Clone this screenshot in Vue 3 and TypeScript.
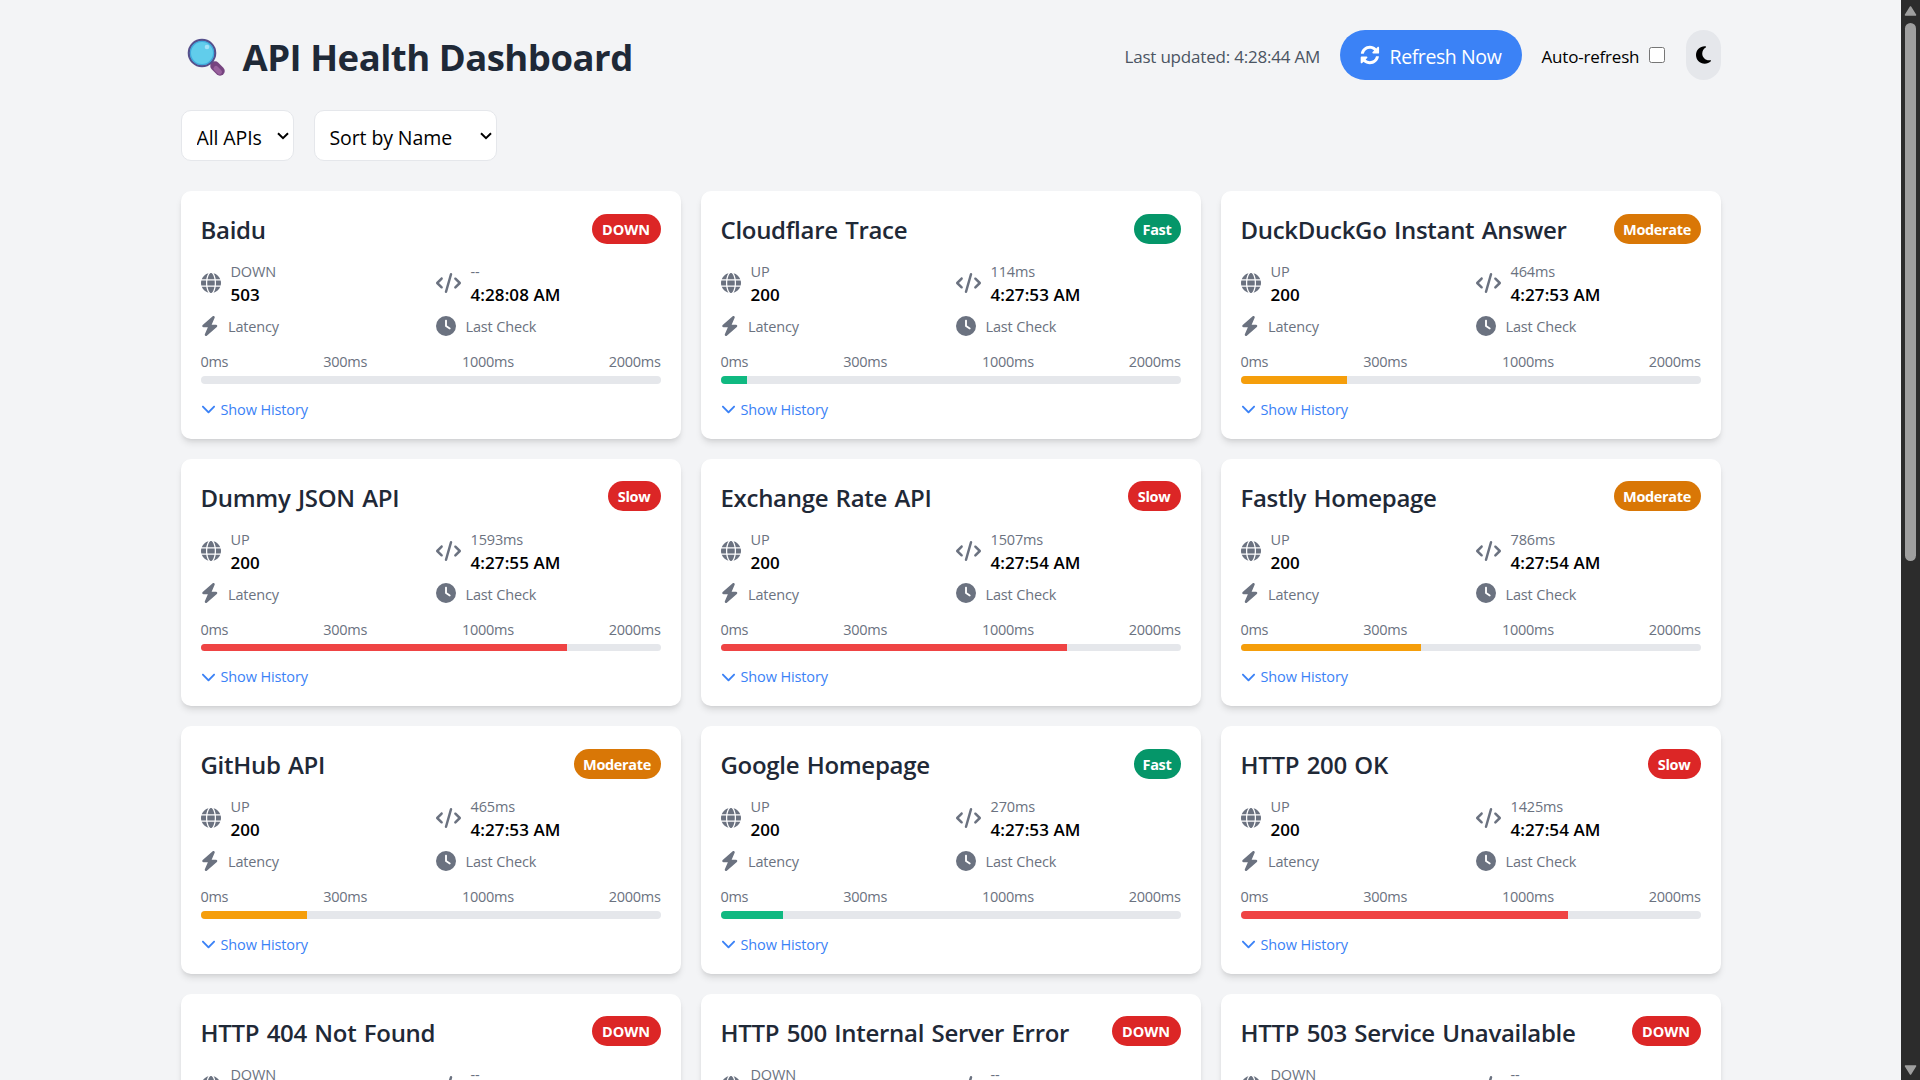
<script setup lang="ts">
type Level = 'down' | 'fast' | 'moderate' | 'slow'

interface Api {
  name: string
  level: Level
  code: number
  latency: number | null
  checked: string
}

const badgeText: Record<Level, string> = {
  down: 'DOWN',
  fast: 'Fast',
  moderate: 'Moderate',
  slow: 'Slow',
}

const apis: Api[] = [
  { name: 'Baidu', level: 'down', code: 503, latency: null, checked: '4:28:08 AM' },
  { name: 'Cloudflare Trace', level: 'fast', code: 200, latency: 114, checked: '4:27:53 AM' },
  { name: 'DuckDuckGo Instant Answer', level: 'moderate', code: 200, latency: 464, checked: '4:27:53 AM' },
  { name: 'Dummy JSON API', level: 'slow', code: 200, latency: 1593, checked: '4:27:55 AM' },
  { name: 'Exchange Rate API', level: 'slow', code: 200, latency: 1507, checked: '4:27:54 AM' },
  { name: 'Fastly Homepage', level: 'moderate', code: 200, latency: 786, checked: '4:27:54 AM' },
  { name: 'GitHub API', level: 'moderate', code: 200, latency: 465, checked: '4:27:53 AM' },
  { name: 'Google Homepage', level: 'fast', code: 200, latency: 270, checked: '4:27:53 AM' },
  { name: 'HTTP 200 OK', level: 'slow', code: 200, latency: 1425, checked: '4:27:54 AM' },
  { name: 'HTTP 404 Not Found', level: 'down', code: 404, latency: null, checked: '4:28:08 AM' },
  { name: 'HTTP 500 Internal Server Error', level: 'down', code: 500, latency: null, checked: '4:28:08 AM' },
  { name: 'HTTP 503 Service Unavailable', level: 'down', code: 503, latency: null, checked: '4:28:08 AM' },
]

const barWidth = (api: Api) => `${((api.latency ?? 0) / 2000) * 100}%`
</script>

<template>
  <div class="page">
    <main class="content">
      <header class="header">
        <h1 class="title">
          <svg class="lens" viewBox="0 0 38 38">
            <line x1="23" y1="23" x2="27" y2="27" stroke="#56508c" stroke-width="4" />
            <line x1="28" y1="28" x2="33" y2="33" stroke="#764480" stroke-width="9.500" stroke-linecap="round" />
            <line x1="29" y1="30.500" x2="32.500" y2="34" stroke="#98609d" stroke-width="5" stroke-linecap="round" />
            <circle cx="15" cy="15" r="13.200" fill="#61cdeb" stroke="#56508c" stroke-width="2.200" />
            <circle cx="15" cy="15" r="11.600" fill="none" stroke="#3fa9dc" stroke-width="1.200" />
            <circle cx="20" cy="9" r="2.300" fill="#a4e2f7" />
          </svg>
          <span>API Health Dashboard</span>
        </h1>
        <div class="tools">
          <span class="updated">Last updated: 4:28:44 AM</span>
          <button class="refresh">
            <svg class="icon" viewBox="0 0 512 512"><path d="M370.720 133.280C339.458 104.008 298.888 87.962 255.848 88c-77.458.068-144.328 53.178-162.791 126.850-1.344 5.363-6.122 9.150-11.651 9.150H24.103c-7.498 0-13.194-6.807-11.807-14.176C33.933 94.924 134.813 8 256 8c66.448 0 126.791 26.136 171.315 68.685L463.030 40.970C478.149 25.851 504 36.559 504 57.941V192c0 13.255-10.745 24-24 24H345.941c-21.382 0-32.090-25.851-16.971-40.971l41.750-41.749zM32 296h134.059c21.382 0 32.090 25.851 16.971 40.971l-41.750 41.750c31.262 29.273 71.835 45.319 114.876 45.280 77.418-.070 144.315-53.144 162.787-126.849 1.344-5.363 6.122-9.150 11.651-9.150h57.304c7.498 0 13.194 6.807 11.807 14.176C478.067 417.076 377.187 504 256 504c-66.448 0-126.791-26.136-171.315-68.685L48.970 471.030C33.851 486.149 8 475.441 8 454.059V320c0-13.255 10.745-24 24-24z" transform="translate(10 14) scale(.95)" /></svg>
            <span class="refresh-text">Refresh Now</span>
          </button>
          <label class="auto"><span>Auto-refresh</span><input type="checkbox" /></label>
          <button class="theme">
            <svg viewBox="0 0 384 512"><path d="M223.500 32C100 32 0 132.300 0 256S100 480 223.500 480c60.600 0 115.500-24.200 155.800-63.400c5-4.900 6.300-12.500 3.100-18.700s-10.100-9.700-17-8.500c-9.800 1.700-19.800 2.600-30.100 2.600c-96.900 0-175.500-78.800-175.500-176c0-65.800 36-123.100 89.300-153.300c6.100-3.500 9.200-10.500 7.700-17.300s-7.300-11.900-14.300-12.500c-6.300-.5-12.600-.8-19-.8z" /></svg>
          </button>
        </div>
      </header>

      <div class="filters">
        <select class="filter-status"><option>All APIs</option></select>
        <select class="filter-sort"><option>Sort by Name</option></select>
      </div>

      <section class="grid">
        <article v-for="api in apis" :key="api.name" class="card">
          <div class="card-head">
            <h2>{{ api.name }}</h2>
            <span class="badge" :class="api.level">{{ badgeText[api.level] }}</span>
          </div>
          <div class="facts">
            <div class="fact">
              <svg class="icon" viewBox="0 0 512 512"><path d="M352 256c0 22.200-1.200 43.600-3.300 64H163.300c-2.200-20.400-3.300-41.800-3.300-64s1.200-43.600 3.300-64H348.700c2.200 20.400 3.300 41.800 3.300 64zm28.800-64H503.900c5.300 20.500 8.100 41.900 8.100 64s-2.800 43.500-8.100 64H380.800c2.100-20.600 3.200-42 3.200-64s-1.100-43.400-3.200-64zm112.600-32H376.700c-10-63.900-29.800-117.400-55.300-151.600c78.300 20.700 142 77.500 171.900 151.600zm-149.100 0H167.700c6.100-36.400 15.500-68.600 27-94.700c10.500-23.600 22.200-40.700 33.500-51.500C239.400 3.200 248.700 0 256 0s16.600 3.200 27.800 13.800c11.300 10.800 23 27.900 33.500 51.500c11.600 26 20.900 58.200 27 94.700zm-209 0H18.600C48.600 85.900 112.200 29.100 190.600 8.400C165.100 42.600 145.300 96.100 135.300 160zM8.100 192H131.200c-2.100 20.600-3.200 42-3.200 64s1.100 43.400 3.200 64H8.100C2.800 299.500 0 278.100 0 256s2.800-43.500 8.100-64zM194.700 446.600c-11.600-26-20.900-58.200-27-94.600H344.300c-6.100 36.400-15.500 68.600-27 94.600c-10.500 23.600-22.200 40.700-33.500 51.500C272.600 508.800 263.300 512 256 512s-16.600-3.200-27.800-13.800c-11.300-10.800-23-27.900-33.500-51.500zM135.300 352c10 63.900 29.800 117.400 55.300 151.600C112.200 482.900 48.600 426.100 18.600 352H135.300zm358.100 0c-30 74.100-93.600 130.900-171.900 151.600c25.500-34.200 45.200-87.700 55.300-151.600H493.400z" /></svg>
              <div>
                <div class="label">{{ api.level === 'down' ? 'DOWN' : 'UP' }}</div>
                <div class="value">{{ api.code }}</div>
              </div>
            </div>
            <div class="fact">
              <svg class="icon wide" viewBox="0 0 640 512"><path d="M392.800 1.200c-17-4.900-34.700 5-39.600 22l-128 448c-4.900 17 5 34.700 22 39.600s34.700-5 39.600-22l128-448c4.900-17-5-34.700-22-39.600zm80.600 120.100c-12.500 12.500-12.500 32.800 0 45.300L562.700 256l-89.400 89.400c-12.500 12.500-12.500 32.800 0 45.300s32.800 12.500 45.300 0l112-112c12.500-12.500 12.500-32.800 0-45.300l-112-112c-12.500-12.500-32.800-12.500-45.300 0zm-306.700 0c-12.500-12.500-32.800-12.500-45.300 0l-112 112c-12.500 12.500-12.500 32.800 0 45.300l112 112c12.500 12.500 32.800 12.500 45.300 0s12.500-32.800 0-45.300L77.300 256l89.400-89.400c12.500-12.500 12.500-32.800 0-45.300z" /></svg>
              <div>
                <div class="label">{{ api.latency === null ? '--' : api.latency + 'ms' }}</div>
                <div class="value">{{ api.checked }}</div>
              </div>
            </div>
            <div class="fact">
              <svg class="icon narrow" viewBox="0 0 448 512"><path d="M349.400 44.600c5.900-13.700 1.500-29.700-10.600-38.500s-28.600-8-39.900 1.800l-256 224c-10 8.800-13.600 22.900-8.900 35.300S50.700 288 64 288H175.500L98.600 467.400c-5.900 13.700-1.500 29.700 10.600 38.500s28.600 8 39.900-1.800l256-224c10-8.800 13.600-22.900 8.900-35.300s-16.600-20.700-30-20.700H272.500L349.400 44.600z" /></svg>
              <span class="label">Latency</span>
            </div>
            <div class="fact">
              <svg class="icon" viewBox="0 0 512 512"><path d="M256 0a256 256 0 1 1 0 512A256 256 0 1 1 256 0zM232 120V256c0 8 4 15.500 10.700 20l96 64c11 7.400 25.900 4.400 33.300-6.700s4.400-25.900-6.700-33.300L280 243.200V120c0-13.300-10.700-24-24-24s-24 10.700-24 24z" /></svg>
              <span class="label">Last Check</span>
            </div>
          </div>
          <div class="scale">
            <span>0ms</span><span>300ms</span><span>1000ms</span><span>2000ms</span>
          </div>
          <div class="track"><div class="bar" :class="api.level" :style="{ width: barWidth(api) }"></div></div>
          <button class="history">
            <svg viewBox="0 0 512 512"><path d="M233.400 406.600c12.500 12.500 32.800 12.500 45.300 0l192-192c12.500-12.500 12.500-32.800 0-45.300s-32.800-12.500-45.300 0L256 338.700 86.600 169.400c-12.500-12.500-32.800-12.500-45.300 0s-12.500 32.800 0 45.300l192 192z" /></svg>
            <span>Show History</span>
          </button>
        </article>
      </section>
    </main>
    <div class="scrollbar">
      <svg class="arrow" viewBox="0 0 13 10"><path d="M6.500 1 11.500 9H1.500Z" /></svg>
      <div class="rail"><div class="thumb"></div></div>
      <svg class="arrow" viewBox="0 0 13 10"><path d="M6.500 9 11.500 1H1.500Z" /></svg>
    </div>
  </div>
</template>

<style>
body {
  background: #f3f4f6;
  overflow: hidden;
}
</style>

<style scoped>
* {
  box-sizing: border-box;
}
.page {
  display: flex;
  height: 1080px;
  overflow: hidden;
  background: #f3f4f6;
  color: #000;
  font-family: 'Segoe UI', 'Open Sans', 'Noto Sans', sans-serif;
  white-space: nowrap;
}
.content {
  flex: 1;
  max-width: 1600px;
  margin: 0 auto;
  padding: 30px;
}
button {
  border: 0;
  padding: 0;
  font-family: inherit;
}
svg {
  display: block;
  flex: none;
  fill: currentColor;
}
.icon {
  width: 20px;
  height: 20px;
}
.icon.wide {
  width: 25px;
}
.icon.narrow {
  width: 17.5px;
}
.fact .icon {
  margin-bottom: 1px;
}
.header {
  display: flex;
  justify-content: space-between;
  align-items: center;
  height: 50px;
  margin-bottom: 30px;
}
.title {
  display: flex;
  align-items: center;
  gap: 18px;
  margin: 0;
  padding-left: 6px;
  color: #1f2937;
  font-size: 36.5px;
  line-height: 45px;
  font-weight: 700;
  letter-spacing: -0.5px;
}
.title span {
  padding-top: 4px;
}
.lens {
  width: 38px;
  height: 38px;
  margin-top: 4px;
}
.tools {
  display: flex;
  align-items: center;
  gap: 20px;
}
.updated {
  width: 195px;
  padding-top: 2px;
  color: #4b5563;
  font-size: 17px;
  letter-spacing: -0.2px;
}
.refresh {
  display: flex;
  align-items: center;
  gap: 10px;
  width: 182px;
  height: 50px;
  padding: 0 20px;
  border-radius: 25px;
  background: #3b82f6;
  color: #fff;
}
.refresh-text {
  padding-top: 2px;
  font-size: 19.5px;
  letter-spacing: -0.4px;
}
.auto {
  display: flex;
  align-items: center;
  justify-content: space-between;
  width: 124px;
  padding-right: 1px;
  font-size: 17px;
  letter-spacing: -0.2px;
}
.auto span {
  padding-top: 2px;
}
.auto input {
  width: 16px;
  height: 16px;
  margin: 0 0 1px;
}
.theme {
  display: flex;
  align-items: center;
  justify-content: center;
  width: 35px;
  height: 50px;
  border-radius: 18px;
  background: #e5e7eb;
  color: #000;
}
.theme svg {
  width: 15px;
  height: 20px;
}
.filters {
  display: flex;
  gap: 20px;
  margin-bottom: 30px;
}
select {
  appearance: none;
  height: 51px;
  padding: 3px 4px 0 15px;
  border: 1px solid #e5e7eb;
  border-radius: 10px;
  background: #fff
    url("data:image/svg+xml,%3Csvg xmlns='http://www.w3.org/2000/svg' width='12' height='8'%3E%3Cpath d='M1 1.200 6 6.200 11 1.200' fill='none' stroke='black' stroke-width='2'/%3E%3C/svg%3E")
    no-repeat right 4px top 21px;
  color: #000;
  font-family: inherit;
  font-size: 19.5px;
  letter-spacing: -0.1px;
}
.filter-status {
  width: 113px;
}
.filter-sort {
  width: 183px;
}
.grid {
  display: grid;
  grid-template-columns: repeat(3, 500px);
  gap: 20px;
}
.card {
  height: 247.5px;
  padding: 20px;
  border-radius: 10px;
  background: #fff;
  box-shadow: 0 5px 7.5px -1.25px rgba(0, 0, 0, 0.1), 0 2.5px 5px -2.5px rgba(0, 0, 0, 0.1);
}
.card-head {
  display: flex;
  justify-content: space-between;
  align-items: center;
  height: 35px;
  margin-bottom: 15px;
}
h2 {
  margin: 0;
  padding-top: 2px;
  color: #1f2937;
  font-size: 24px;
  line-height: 33px;
  font-weight: 600;
  letter-spacing: -0.3px;
  word-spacing: 1.5px;
}
.badge {
  height: 30px;
  padding-top: 1px;
  border-radius: 15px;
  color: #fff;
  font-size: 14.5px;
  line-height: 29px;
  font-weight: 700;
  letter-spacing: -0.35px;
  text-align: center;
}
.badge.down {
  width: 69px;
  background: #dc2626;
  letter-spacing: 0;
}
.badge.slow {
  width: 53px;
  background: #dc2626;
}
.badge.fast {
  width: 47px;
  background: #059669;
}
.badge.moderate {
  width: 87px;
  background: #d97706;
}
.facts {
  display: grid;
  grid-template-columns: 1fr 1fr;
  gap: 10px;
}
.fact {
  display: flex;
  align-items: center;
  gap: 10px;
  height: 20px;
  color: #6b7280;
}
.fact:nth-child(-n + 2) {
  height: 45px;
}
.label {
  padding-top: 2px;
  font-size: 14.5px;
  line-height: 18px;
  letter-spacing: -0.15px;
}
.value {
  padding-top: 2px;
  color: #000;
  font-size: 17px;
  line-height: 23px;
  font-weight: 600;
  letter-spacing: 0.08px;
}
.scale {
  display: flex;
  justify-content: space-between;
  margin: 15px 0 5px;
  padding-top: 2px;
  color: #6b7280;
  font-size: 14.5px;
  line-height: 18px;
  letter-spacing: -0.3px;
}
.track {
  height: 7.5px;
  border-radius: 4px;
  overflow: hidden;
  background: #e5e7eb;
}
.bar {
  height: 100%;
}
.bar.fast {
  background: #10b981;
}
.bar.moderate {
  background: #f59e0b;
}
.bar.slow {
  background: #ef4444;
}
.history {
  display: flex;
  align-items: center;
  gap: 5px;
  margin-top: 15px;
  background: none;
  color: #3b82f6;
  font-size: 14.5px;
  line-height: 18px;
  letter-spacing: -0.13px;
}
.history span {
  padding-top: 2px;
}
.history svg {
  width: 15px;
  height: 15px;
}
.scrollbar {
  display: flex;
  flex-direction: column;
  align-items: center;
  width: 19px;
  padding: 6px 0 5px;
  background: #2c2c2c;
  color: #9f9f9f;
}
.arrow {
  width: 13px;
  height: 10px;
  stroke: currentColor;
  stroke-width: 1.5;
  stroke-linejoin: round;
}
.rail {
  flex: 1;
  padding-top: 7px;
}
.thumb {
  width: 11px;
  height: 538px;
  border-radius: 6px;
  background: #9f9f9f;
}
</style>
